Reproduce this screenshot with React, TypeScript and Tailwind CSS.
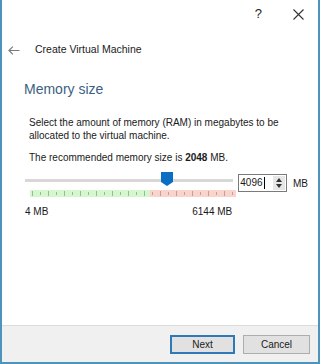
import React from "react";

const font = { fontFamily: '"Liberation Sans", Arial, sans-serif' };

const Ticks: React.FC = () => {
  const ticks = [];
  for (let x = 2; x < 206; x += 8) {
    const red = x >= 120;
    ticks.push(
      <rect
        key={x}
        x={x}
        y={x % 16 === 2 ? 1 : 2}
        width={1}
        height={x % 16 === 2 ? 5 : 3}
        fill={red ? "#d09a94" : "#8fbf8a"}
      />
    );
  }
  return (
    <svg width="206" height="7" viewBox="0 0 206 7">
      <rect x="0" y="0" width="120" height="7" fill="#d6f6d0" />
      <rect x="120" y="0" width="86" height="7" fill="#f8d4cc" />
      {ticks}
    </svg>
  );
};

const App: React.FC = () => {
  return (
    <div
      className="w-[320px] h-[364px] bg-white flex flex-col border-x-2 border-b-2 border-[#4e93b9] text-[#1a1a1a]"
      style={font}
    >
      {/* caption buttons */}
      <div className="h-[28px] flex items-center justify-end">
        <span className="text-[13px] text-[#222] mr-[31px]">?</span>
        <svg width="11" height="11" viewBox="0 0 11 11" className="mr-[14px]">
          <path d="M0.5 0.5 L10.5 10.5 M10.5 0.5 L0.5 10.5" stroke="#333" strokeWidth="1.1" />
        </svg>
      </div>

      {/* title row */}
      <div className="h-[44px] flex items-center">
        <svg width="12" height="9" viewBox="0 0 12 9" className="ml-[6px]">
          <path d="M11.5 4.5 H1 M4.8 0.7 L1 4.5 L4.8 8.3" stroke="#7a7a7a" strokeWidth="1.2" fill="none" />
        </svg>
        <span className="ml-[15px] text-[10.5px] text-[#1a1a1a]">Create Virtual Machine</span>
      </div>

      <div className="pl-[22px] pr-[10px]">
        <div className="mt-[7px] h-[20px] leading-[20px] text-[14px] text-[#3b5f82]">Memory size</div>

        <div className="mt-[17px] pl-[5px] text-[10px] leading-[13px]">
          <div>Select the amount of memory (RAM) in megabytes to be</div>
          <div>allocated to the virtual machine.</div>
          <div className="mt-[9px]">
            The recommended memory size is <b>2048</b> MB.
          </div>
        </div>

        {/* slider row */}
        <div className="mt-[7px] flex items-start">
          <div className="w-[214px] ml-[1px] flex flex-col">
            <div className="relative h-[27px]">
              <div className="absolute left-0 right-0 top-[8px] h-[3px] bg-[#d8d8d8]" />
              <svg
                width="12"
                height="14"
                viewBox="0 0 12 14"
                className="absolute left-[136px] top-[1px]"
              >
                <path d="M0 0 H12 V10 L6 14 L0 10 Z" fill="#0a6fc2" />
              </svg>
              <div className="absolute left-[5px] top-[19px]">
                <Ticks />
              </div>
            </div>
            <div className="mt-[8px] flex justify-between text-[10px] leading-[12px] pr-[1px]">
              <span>4 MB</span>
              <span>6144 MB</span>
            </div>
          </div>

          <div className="ml-[5px] mt-[3px] w-[50px] h-[18px] border border-[#7a7a7a] flex items-center bg-white">
            <span className="pl-[1px] text-[10px] leading-[12px]">4096</span>
            <span className="ml-[1px] w-px h-[12px] bg-black" />
            <div className="ml-auto mr-[1px] w-[12px] h-[14px] bg-[#e6e6e6] flex flex-col items-center justify-center gap-[2px]">
              <svg width="6" height="4" viewBox="0 0 6 4">
                <path d="M0 4 L3 0 L6 4 Z" fill="#333" />
              </svg>
              <svg width="6" height="4" viewBox="0 0 6 4">
                <path d="M0 0 L3 4 L6 0 Z" fill="#333" />
              </svg>
            </div>
          </div>
          <span className="ml-[6px] mt-[7px] text-[10px] leading-[12px]">MB</span>
        </div>
      </div>

      {/* footer */}
      <div className="mt-auto h-[37px] bg-[#f0f0f0] border-t border-[#dcdcdc] flex items-center justify-end gap-[8px] pr-[8px]">
        <button className="w-[65px] h-[19px] bg-[#e1e1e1] border-2 border-[#2f79b8] text-[10px] text-[#1a1a1a] flex items-center justify-center">
          Next
        </button>
        <button className="w-[67px] h-[19px] bg-[#e1e1e1] border border-[#adadad] text-[10px] text-[#1a1a1a] flex items-center justify-center">
          Cancel
        </button>
      </div>
    </div>
  );
};

export default App;
